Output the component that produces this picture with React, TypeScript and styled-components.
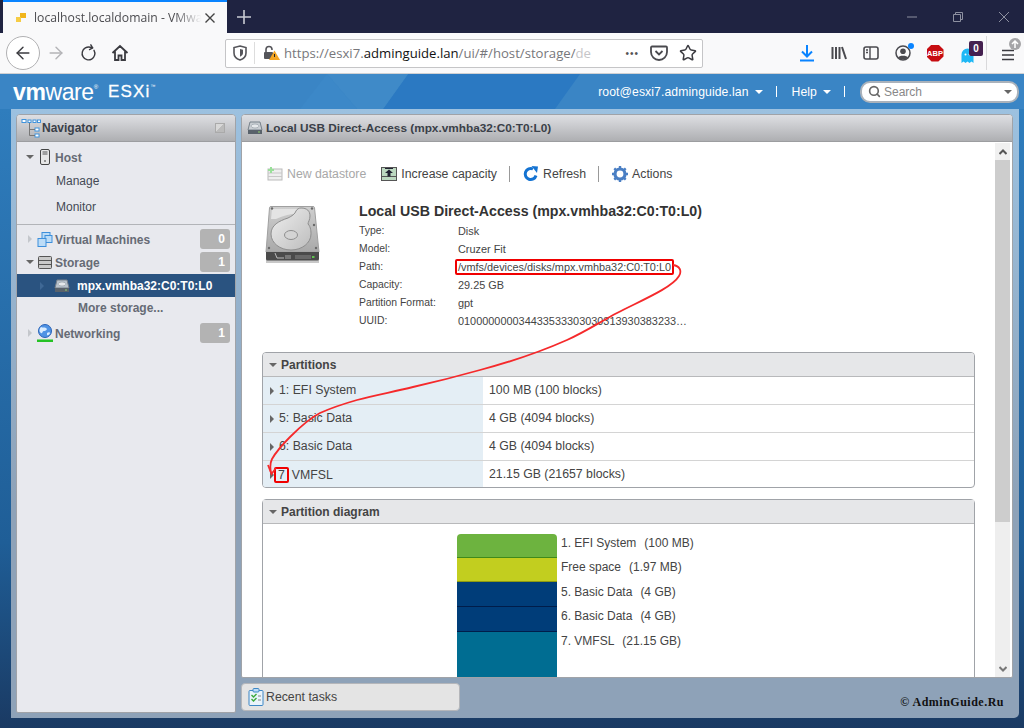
import React from 'react';
import styled, { createGlobalStyle } from 'styled-components';
import {
  ArrowLeft,
  ArrowRight,
  RotateCw,
  Star,
  Search as SearchGlyph,
} from 'lucide-react';

const INFO_ROWS: [string, string][] = [
  ['Type:', 'Disk'],
  ['Model:', 'Cruzer Fit'],
  ['Path:', '/vmfs/devices/disks/mpx.vmhba32:C0:T0:L0'],
  ['Capacity:', '29.25 GB'],
  ['Partition Format:', 'gpt'],
  ['UUID:', '010000000034433533303030313930383233…'],
];

const PARTITIONS: [string, string][] = [
  ['1: EFI System', '100 MB (100 blocks)'],
  ['5: Basic Data', '4 GB (4094 blocks)'],
  ['6: Basic Data', '4 GB (4094 blocks)'],
];

const SEGMENTS = [
  { h: 24, bg: '#6db33f', line: '#3f8a1a', name: '1. EFI System', size: '(100 MB)' },
  { h: 24, bg: '#c2ce1f', line: '#8f9a10', name: 'Free space', size: '(1.97 MB)' },
  { h: 25, bg: '#003d79', line: '#001d4a', name: '5. Basic Data', size: '(4 GB)' },
  { h: 25, bg: '#003d79', line: '#001d4a', name: '6. Basic Data', size: '(4 GB)' },
  { h: 46, bg: '#006d92', line: '#006d92', name: '7. VMFSL', size: '(21.15 GB)' },
];

const HddSmall = ({ light }: { light?: boolean }) => (
  <svg width="16" height="14" viewBox="0 0 16 14">
    <path d="M3 1h10l2 8H1z" fill={light ? '#b9c3cd' : '#c9ced3'} stroke="#77808a" />
    <rect x="1" y="9" width="14" height="4" fill="#59626b" />
    <ellipse cx="8" cy="5" rx="4" ry="2" fill="#e6e9ec" stroke="#8c959e" strokeWidth=".6" />
    <rect x="11" y="10.5" width="2" height="1" fill="#8fd16f" />
  </svg>
);

const DiskIcon = () => (
  <svg width="56" height="58" viewBox="0 0 56 58">
    <defs>
      <linearGradient id="diskBody" x1="0" y1="0" x2="0" y2="1">
        <stop offset="0" stopColor="#cfcfcf" />
        <stop offset="1" stopColor="#a9a9a9" />
      </linearGradient>
      <linearGradient id="diskPlatter" x1="0" y1="0" x2="1" y2="1">
        <stop offset="0" stopColor="#efefef" />
        <stop offset="1" stopColor="#bdbdbd" />
      </linearGradient>
    </defs>
    <rect x="1" y="54" width="53" height="3" fill="#c8c8c8" />
    <path d="M6 .5h42a1.500 1.500 0 0 1 1.500 1.300L54 46H1L4.500 1.800A1.500 1.500 0 0 1 6 .5z" fill="url(#diskBody)" stroke="#a0a0a0" />
    <path d="M1 46h53v7a1.500 1.500 0 0 1-1.500 1.500h-50A1.500 1.500 0 0 1 1 53z" fill="#4a4a4a" />
    <path d="M10 47l2 5h7" fill="none" stroke="#d8d8d8" strokeWidth=".8" />
    <rect x="20" y="49" width="6" height="4" fill="#777" />
    <rect x="30" y="49" width="16" height="4" fill="#686868" />
    <rect x="47" y="50" width="2.500" height="2" fill="#5fc24f" />
    <path d="M7 3h26v4c-8 1-16 3-22 6H6z" fill="#e4e4e4" />
    <path d="M36 2c6 0 9 3 9 8 0 4-2 6-2 8 3 3 3 8 3 10 0 9-9 16-20 16S6 37 6 28s8-13 17-16c4-2 7-4 8-7 1-2 3-3 5-3z" fill="url(#diskPlatter)" stroke="#8e8e8e" />
    <ellipse cx="26" cy="29" rx="6.500" ry="4.500" fill="#d4d4d4" stroke="#8e8e8e" />
    <g fill="#6a6a6a">
      <circle cx="7" cy="2.500" r="1.200" />
      <circle cx="47" cy="2.500" r="1.200" />
      <circle cx="49" cy="19" r="1.200" />
      <circle cx="4" cy="42" r="1.200" />
      <circle cx="51" cy="42" r="1.200" />
    </g>
  </svg>
);

const App = () => {
  return (
    <Root>
      <GlobalStyle />
      <TabBar>
        <Tab>
          <svg width="12" height="12" viewBox="0 0 12 12">
            <rect x="5" y="1" width="6" height="5" fill="#f1b51c" />
            <rect x="1" y="5" width="5" height="5" fill="#f6cc45" />
          </svg>
          <TabTitle>localhost.localdomain - VMwar</TabTitle>
          <svg width="10" height="10" viewBox="0 0 10 10">
            <path d="M.5.5l9 9M9.500.5l-9 9" stroke="#444" strokeWidth="1.4" />
          </svg>
        </Tab>
        <NewTab>
          <svg width="14" height="14" viewBox="0 0 14 14">
            <path d="M7 0v14M0 7h14" stroke="#c9cbd3" strokeWidth="1.6" />
          </svg>
        </NewTab>
        <WindowControls>
          <svg width="12" height="12" viewBox="0 0 12 12">
            <path d="M1 6h10" stroke="#8d90a0" />
          </svg>
          <svg width="12" height="12" viewBox="0 0 12 12">
            <path d="M1.500 3.500h7v7h-7zM3.500 3.500v-2h7v7h-2" fill="none" stroke="#8d90a0" />
          </svg>
          <svg width="12" height="12" viewBox="0 0 12 12">
            <path d="M1 1l10 10M11 1L1 11" stroke="#8d90a0" />
          </svg>
        </WindowControls>
      </TabBar>

      <BrowserBar>
        <BackButton>
          <ArrowLeft size={20} color="#3b3b40" strokeWidth={1.7} />
        </BackButton>
        <BarSlot>
          <ArrowRight size={20} color="#b4b4b7" strokeWidth={1.7} />
        </BarSlot>
        <BarSlot>
          <RotateCw size={17} color="#3b3b40" strokeWidth={2} style={{ transform: 'rotate(-30deg)' }} />
        </BarSlot>
        <BarSlot>
          <svg width="18" height="18" viewBox="0 0 18 18">
            <path d="M1.500 9L9 2l7.500 7M4 7.500V16h3.500v-4.500h3V16H14V7.500" fill="none" stroke="#3b3b40" strokeWidth="1.8" />
          </svg>
        </BarSlot>
        <UrlBox>
          <svg width="14" height="16" viewBox="0 0 14 16">
            <path d="M7 1l6 1.500V8c0 3.500-3 6-6 7-3-1-6-3.500-6-7V2.500z" fill="none" stroke="#55555a" strokeWidth="1.600" />
            <path d="M7 4l3 .7V8c0 1.700-1.500 3-3 3.700z" fill="#55555a" />
          </svg>
          <UrlDivider />
          <LockWrap>
            <svg width="17" height="16" viewBox="0 0 17 16">
              <path d="M3 7V4.500a3 3 0 0 1 6 0V5" fill="none" stroke="#55555a" strokeWidth="1.600" />
              <rect x="1" y="7" width="9" height="7" rx="1" fill="#55555a" />
              <path d="M11.500 5.500L17 15H6z" fill="#f5a623" />
              <path d="M11.500 9v3" stroke="#222" />
            </svg>
          </LockWrap>
          <UrlText>
            https://esxi7.<strong>adminguide.lan</strong>/ui/#/host/storage/<Faded>de</Faded>
          </UrlText>
          <UrlActions>
            <Dots>•••</Dots>
            <svg width="18" height="16" viewBox="0 0 18 16">
              <path d="M2 1.500h14a1 1 0 0 1 1 1V7a8 8 0 0 1-16 0V2.500a1 1 0 0 1 1-1z" fill="none" stroke="#4a4a4f" strokeWidth="1.800" />
              <path d="M5.500 6l3.500 3.500L12.500 6" fill="none" stroke="#4a4a4f" strokeWidth="1.800" />
            </svg>
            <Star size={18} color="#3b3b40" strokeWidth={2} />
          </UrlActions>
        </UrlBox>
        <RightTools>
          <BarSlot>
            <svg width="16" height="18" viewBox="0 0 16 18">
              <path d="M8 1v11M3 7.500L8 12.500l5-5M1 16.500h14" fill="none" stroke="#0a84ff" strokeWidth="2" />
            </svg>
          </BarSlot>
          <BarSlot>
            <svg width="16" height="16" viewBox="0 0 16 16">
              <path d="M1.500 2v12M5 2v12M8.500 2v12M11 2l4 12" stroke="#4a4a4f" strokeWidth="2" />
            </svg>
          </BarSlot>
          <BarSlot>
            <svg width="16" height="14" viewBox="0 0 16 14">
              <rect x="1" y="1" width="14" height="12" rx="2" fill="none" stroke="#4a4a4f" strokeWidth="1.600" />
              <path d="M7 1v12M3 4h2M3 6.500h2" stroke="#4a4a4f" strokeWidth="1.400" />
            </svg>
          </BarSlot>
          <BarSlot>
            <svg width="16" height="16" viewBox="0 0 16 16">
              <circle cx="8" cy="8" r="7" fill="none" stroke="#4a4a4f" strokeWidth="1.500" />
              <circle cx="8" cy="6.200" r="2.800" fill="#4a4a4f" />
              <path d="M3 12.500c1-2.500 9-2.500 10 0-2 2.500-8 2.500-10 0z" fill="#4a4a4f" />
            </svg>
            <SyncDot />
          </BarSlot>
          <BarSlot>
            <AbpSign>ABP</AbpSign>
          </BarSlot>
          <BarSlot>
            <GhostIcon width="13" height="16" viewBox="0 0 13 16">
              <path d="M.5 15V6.500a6 6 0 0 1 12 0V15l-2-1.500-2 1.500-2-1.500-2 1.500-2-1.500z" fill="#1fb8f5" />
              <circle cx="4.500" cy="6.500" r="1" fill="#fff" />
              <circle cx="8.500" cy="6.500" r="1" fill="#fff" />
            </GhostIcon>
            <GhostCount>0</GhostCount>
          </BarSlot>
          <BarDivider />
          <MenuSlot>
            <svg width="14" height="12" viewBox="0 0 14 12">
              <path d="M1 1.500h12M1 6h12M1 10.500h12" stroke="#3b3b40" strokeWidth="1.600" />
            </svg>
            <UpdateBadge>
              <svg width="8" height="8" viewBox="0 0 8 8">
                <path d="M4 8V1M1 4l3-3 3 3" fill="none" stroke="#fff" strokeWidth="1.500" />
              </svg>
            </UpdateBadge>
          </MenuSlot>
        </RightTools>
      </BrowserBar>

      <AppHeader>
        <HeaderArt width="1024" height="35" viewBox="0 0 1024 35">
          <polygon points="408,0 580,0 555,35 383,35" fill="#2b79c2" />
          <polygon points="327,0 408,0 383,35 357,35" fill="#3f8ac8" />
          <polygon points="327,0 357,35 300,35" fill="#3c88c8" />
        </HeaderArt>
        <Logo>
          <LogoWord>
            <b>vm</b>ware<sup>®</sup>
          </LogoWord>
          <LogoProduct>
            ESXi<sup>™</sup>
          </LogoProduct>
        </Logo>
        <HeaderMenu>
          <MenuLabel>root@esxi7.adminguide.lan</MenuLabel>
          <Caret $dir="down" $color="#fff" />
          <HeaderSep />
          <MenuLabel>Help</MenuLabel>
          <Caret $dir="down" $color="#fff" />
          <HeaderSep />
          <SearchBox>
            <SearchGlyph size={13} color="#666" strokeWidth={3} />
            <SearchHint>Search</SearchHint>
            <Caret $dir="down" $color="#666" />
          </SearchBox>
        </HeaderMenu>
      </AppHeader>

      <Workspace>
        <Frame>
          <Navigator>
            <NavHead>
              <svg width="20" height="20" viewBox="0 0 20 20">
                <g fill="#fff" stroke="#3f94de">
                  <rect x="1" y="1.500" width="4" height="3" />
                  <rect x="7" y="2" width="3" height="2.500" />
                  <rect x="12" y="2" width="3" height="2.500" />
                  <rect x="16.500" y="2" width="3" height="2.500" />
                  <rect x="14" y="10" width="4" height="3" />
                  <rect x="14" y="16" width="4" height="3" />
                </g>
                <path d="M8.500 5v12.500H14M8.500 11.500H14" fill="none" stroke="#777" />
              </svg>
              <NavTitle>Navigator</NavTitle>
              <CollapseBox />
            </NavHead>
            <NavBody>
              <HostSection>
                <HostRow $left={9}>
                  <Caret $dir="down" $color="#666" />
                  <NavIconSlot $gap={3}>
                    <svg width="10" height="16" viewBox="0 0 10 16">
                      <rect x=".5" y=".5" width="9" height="15" rx="1.500" fill="#e6e6e6" stroke="#444" />
                      <path d="M2.500 3h5M2.500 5h5" stroke="#555" />
                      <circle cx="5" cy="12" r="1" fill="#777" />
                    </svg>
                  </NavIconSlot>
                  <NavLabel>Host</NavLabel>
                </HostRow>
                <NavLink>Manage</NavLink>
                <NavLink>Monitor</NavLink>
              </HostSection>
              <TreeSection>
                <NavRow $left={11}>
                  <Caret $dir="right" $color="#c4c7cc" />
                  <NavIconSlot $gap={5}>
                    <svg width="16" height="15" viewBox="0 0 16 15">
                      <g fill="#bcdcf7" stroke="#3d8fdb">
                        <rect x="5" y=".5" width="8" height="6" />
                        <rect x="8" y="3.500" width="7" height="7" />
                        <rect x="1" y="6.500" width="8" height="8" />
                      </g>
                    </svg>
                  </NavIconSlot>
                  <NavLabel>Virtual Machines</NavLabel>
                  <Badge>0</Badge>
                </NavRow>
                <NavRow $left={9}>
                  <Caret $dir="down" $color="#666" />
                  <NavIconSlot $gap={3}>
                    <svg width="14" height="13" viewBox="0 0 14 13">
                      <rect x=".5" y=".5" width="13" height="12" rx="1" fill="#c9c9c9" stroke="#555" />
                      <path d="M.5 4.500h13M.5 8.500h13" stroke="#555" />
                    </svg>
                  </NavIconSlot>
                  <NavLabel>Storage</NavLabel>
                  <Badge>1</Badge>
                </NavRow>
                <SelectedRow>
                  <Caret $dir="right" $color="#3f6895" />
                  <HddSmall light />
                  <SelectedLabel>mpx.vmhba32:C0:T0:L0</SelectedLabel>
                </SelectedRow>
                <MoreStorage>More storage...</MoreStorage>
                <NetRow $left={11}>
                  <Caret $dir="right" $color="#c4c7cc" />
                  <NavIconSlot $gap={5}>
                    <svg width="16" height="18" viewBox="0 0 16 18">
                      <circle cx="8" cy="7" r="6.500" fill="#4f93e4" stroke="#2a63b8" />
                      <path d="M4 3c2 1 3 0 5 1s0 3-2 3-1 3-3 2-2-4 0-6zM10 9c1-1 3-1 3 0s-2 3-3 2z" fill="#d9ecff" />
                      <rect y="15.500" width="16" height="2.500" fill="#25c225" />
                    </svg>
                  </NavIconSlot>
                  <NavLabel>Networking</NavLabel>
                  <Badge>1</Badge>
                </NetRow>
              </TreeSection>
            </NavBody>
          </Navigator>

          <MainColumn>
            <MainPanel>
              <PanelHead>
                <HddSmall />
                <MainTitle>Local USB Direct-Access (mpx.vmhba32:C0:T0:L0)</MainTitle>
              </PanelHead>
              <MainBody>
                <Content>
                  <Toolbar>
                    <ToolButton $disabled>
                      <svg width="16" height="14" viewBox="0 0 16 14">
                        <rect x="1" y="2" width="14" height="11" fill="#eee" stroke="#bbb" />
                        <path d="M1 6h14M1 9.500h14" stroke="#c8c8c8" />
                        <path d="M4 0v6M1 3h6" stroke="#9adf9a" strokeWidth="2" />
                      </svg>
                      New datastore
                    </ToolButton>
                    <ToolButton>
                      <svg width="16" height="14" viewBox="0 0 16 14">
                        <rect x=".5" y=".5" width="15" height="13" fill="#bcd8c0" stroke="#555" />
                        <path d="M.5 9.500h15" stroke="#555" />
                        <path d="M8 2.500l4 3.500H9.500v3.500h-3V6H4z" fill="#223" />
                        <path d="M4 1.500h8" stroke="#223" />
                      </svg>
                      Increase capacity
                    </ToolButton>
                    <ToolSep />
                    <ToolButton>
                      <svg width="16" height="16" viewBox="0 0 16 16">
                        <path d="M13 9.500a5.500 5.500 0 1 1-3-6.500" fill="none" stroke="#1473d2" strokeWidth="3" />
                        <path d="M8.500 0L15 .5 14 7z" fill="#1473d2" />
                      </svg>
                      Refresh
                    </ToolButton>
                    <ToolSep />
                    <ToolButton>
                      <svg width="16" height="16" viewBox="0 0 16 16">
                        <circle cx="8" cy="8" r="5" fill="none" stroke="#4a7fc4" strokeWidth="3.200" />
                        <path d="M8 0v3M8 13v3M0 8h3M13 8h3M2.300 2.300l2.200 2.200M11.500 11.500l2.200 2.200M13.700 2.300l-2.200 2.200M4.500 11.500l-2.200 2.200" stroke="#4a7fc4" strokeWidth="2.400" />
                      </svg>
                      Actions
                    </ToolButton>
                  </Toolbar>

                  <InfoSection>
                    <DiskSlot>
                      <DiskIcon />
                    </DiskSlot>
                    <div>
                      <InfoTitle>Local USB Direct-Access (mpx.vmhba32:C0:T0:L0)</InfoTitle>
                      {INFO_ROWS.map(([label, value]) => (
                        <InfoRow key={label}>
                          <InfoLabel>{label}</InfoLabel>
                          {label === 'Path:' ? <PathMark>{value}</PathMark> : <span>{value}</span>}
                        </InfoRow>
                      ))}
                    </div>
                  </InfoSection>

                  <PartitionCard>
                    <CardHead>
                      <Caret $dir="down" $color="#666" />
                      Partitions
                    </CardHead>
                    {PARTITIONS.map(([name, size]) => (
                      <PartRow key={name}>
                        <PartName>
                          <Caret $dir="right" $color="#666" />
                          {name}
                        </PartName>
                        <PartSize>{size}</PartSize>
                      </PartRow>
                    ))}
                    <PartRow>
                      <PartName>
                        <Caret $dir="right" $color="#666" />
                        <NumberMark>7</NumberMark>VMFSL
                      </PartName>
                      <PartSize>21.15 GB (21657 blocks)</PartSize>
                    </PartRow>
                  </PartitionCard>

                  <DiagramCard>
                    <CardHead>
                      <Caret $dir="down" $color="#666" />
                      Partition diagram
                    </CardHead>
                    <Diagram>
                      <Bars>
                        {SEGMENTS.map((s) => (
                          <Segment key={s.name} $h={s.h} $bg={s.bg} $line={s.line} />
                        ))}
                      </Bars>
                      <Legend>
                        {SEGMENTS.map((s) => (
                          <LegendRow key={s.name}>
                            <span>{s.name}</span>
                            <span>{s.size}</span>
                          </LegendRow>
                        ))}
                      </Legend>
                    </Diagram>
                  </DiagramCard>
                </Content>
                <Scrollbar>
                  <ScrollArrow>
                    <svg width="8" height="6" viewBox="0 0 8 6">
                      <path d="M.5 5L4 1.500 7.500 5" fill="none" stroke="#555" strokeWidth="2" />
                    </svg>
                  </ScrollArrow>
                  <ScrollThumb />
                  <ScrollArrow>
                    <svg width="8" height="6" viewBox="0 0 8 6">
                      <path d="M.5 1L4 4.500 7.500 1" fill="none" stroke="#777" strokeWidth="2" />
                    </svg>
                  </ScrollArrow>
                </Scrollbar>
              </MainBody>
            </MainPanel>
            <BottomRow>
              <RecentTasks>
                <svg width="16" height="18" viewBox="0 0 16 18">
                  <rect x="1" y="2.500" width="14" height="15" rx="1" fill="#e9f3fb" stroke="#3d87c5" />
                  <rect x="5" y=".5" width="6" height="3.500" rx="1" fill="#bcdcf7" stroke="#3d87c5" />
                  <path d="M3.500 7l2 2 3-3M3.500 11l2 2 3-3" fill="none" stroke="#3caa3c" strokeWidth="1.400" />
                  <path d="M10 8h3M10 12h3" stroke="#888" />
                </svg>
                Recent tasks
              </RecentTasks>
              <Watermark>© AdminGuide.Ru</Watermark>
            </BottomRow>
          </MainColumn>
        </Frame>
      </Workspace>

      <Annotation width="1024" height="728" viewBox="0 0 1024 728">
        <path
          d="M673 265C680 266 682 271 679 276C672 288 640 301 617 313C600 322 585 332 567 340C540 352 510 362 480 370C455 377 435 382 413 387C393 392 375 395 357 400C343 404 331 408 320 413C310 418 299 428 290 437C282 445 276 452 272 459C270 463 270 468 271 473"
          fill="none"
          stroke="#f5292b"
          strokeWidth="1.800"
        />
        <path d="M268 465L271.500 474L276 468" fill="none" stroke="#f5292b" strokeWidth="1.800" />
      </Annotation>
    </Root>
  );
};

const GlobalStyle = createGlobalStyle`
  html, body {
    margin: 0;
    padding: 0;
    background: #1a3a63;
  }
  * {
    box-sizing: border-box;
  }
`;

const Root = styled.div`
  position: relative;
  display: flex;
  flex-direction: column;
  width: 1024px;
  height: 728px;
  overflow: hidden;
  font-family: 'Liberation Sans', Arial, sans-serif;
  color: #333;
`;

const TabBar = styled.div`
  display: flex;
  align-items: stretch;
  flex: 0 0 33px;
  padding-left: 3px;
  background: #1f2341;
`;

const Tab = styled.div`
  display: flex;
  align-items: center;
  width: 224px;
  padding: 0 12px;
  background: #f9f9fa;
  border-top: 2px solid #0a84ff;
  svg {
    flex: none;
  }
`;

const TabTitle = styled.div`
  flex: 1;
  min-width: 0;
  margin-left: 7px;
  white-space: nowrap;
  font: 12.2px 'Open Sans', sans-serif;
  color: #4c4c50;
  -webkit-mask-image: linear-gradient(to right, #000 82%, transparent 98%);
  mask-image: linear-gradient(to right, #000 82%, transparent 98%);
`;

const NewTab = styled.div`
  display: flex;
  align-items: center;
  padding-left: 10px;
`;

const WindowControls = styled.div`
  display: flex;
  align-items: center;
  gap: 34px;
  margin-left: auto;
  padding-right: 14px;
`;

const BrowserBar = styled.div`
  display: flex;
  align-items: center;
  flex: 0 0 41px;
  padding-left: 6px;
  background: #f9f9fa;
  border-bottom: 1px solid #d0d0d2;
`;

const BackButton = styled.div`
  display: flex;
  align-items: center;
  justify-content: center;
  width: 34px;
  height: 34px;
  background: #fff;
  border: 1px solid #b1b1b3;
  border-radius: 50%;
`;

const BarSlot = styled.div`
  position: relative;
  display: flex;
  align-items: center;
  justify-content: center;
  width: 32px;
  height: 32px;
`;

const UrlBox = styled.div`
  display: flex;
  align-items: center;
  width: 478px;
  height: 29px;
  margin-left: 89px;
  padding-left: 7px;
  background: #fff;
  border: 1px solid #c5c5c7;
  border-radius: 2px;
`;

const UrlDivider = styled.div`
  width: 1px;
  height: 22px;
  margin: 0 8px 0 7px;
  background: #ddd;
`;

const LockWrap = styled.div`
  display: flex;
  width: 21px;
`;

const UrlText = styled.div`
  font: 13.15px 'Open Sans', sans-serif;
  color: #77777b;
  white-space: nowrap;
  strong {
    font-weight: 400;
    color: #111;
  }
`;

const Faded = styled.span`
  color: #c5c5c8;
`;

const UrlActions = styled.div`
  display: flex;
  align-items: center;
  gap: 11px;
  margin-left: auto;
  padding-right: 5px;
`;

const Dots = styled.span`
  font-size: 10px;
  letter-spacing: 1px;
  color: #555;
`;

const RightTools = styled.div`
  display: flex;
  align-items: center;
  margin-left: 88px;
`;

const SyncDot = styled.span`
  position: absolute;
  top: 6px;
  right: 5px;
  width: 6px;
  height: 6px;
  border-radius: 50%;
  background: #0a84ff;
`;

const AbpSign = styled.div`
  display: flex;
  align-items: center;
  justify-content: center;
  width: 17px;
  height: 17px;
  background: #c70d11;
  clip-path: polygon(30% 0, 70% 0, 100% 30%, 100% 70%, 70% 100%, 30% 100%, 0 70%, 0 30%);
  color: #fff;
  font-size: 7.5px;
  font-weight: bold;
`;

const GhostIcon = styled.svg`
  margin-top: 6px;
`;

const GhostCount = styled.span`
  position: absolute;
  top: 4px;
  right: 0;
  width: 14px;
  height: 15px;
  border-radius: 2px;
  background: #44204f;
  color: #fff;
  font-size: 10px;
  font-weight: bold;
  line-height: 15px;
  text-align: center;
`;

const BarDivider = styled.div`
  width: 1px;
  height: 34px;
  margin-left: 3px;
  background: #d9d9db;
`;

const MenuSlot = styled.div`
  position: relative;
  display: flex;
  align-items: center;
  justify-content: center;
  width: 37px;
  height: 32px;
  padding: 4px 0 0 5px;
`;

const UpdateBadge = styled.span`
  position: absolute;
  top: 1px;
  right: 3px;
  display: flex;
  align-items: center;
  justify-content: center;
  width: 12px;
  height: 12px;
  border-radius: 50%;
  background: #a5a5a8;
`;

const AppHeader = styled.div`
  position: relative;
  display: flex;
  align-items: center;
  flex: 0 0 35px;
  padding: 0 5px 0 13px;
  background: #3a85c5;
  color: #fff;
`;

const HeaderArt = styled.svg`
  position: absolute;
  top: 0;
  left: 0;
`;

const Logo = styled.div`
  position: relative;
  display: flex;
  align-items: center;
  gap: 9px;
`;

const LogoWord = styled.div`
  width: 86px;
  font-size: 23px;
  letter-spacing: -0.4px;
  line-height: 30px;
  b {
    font-weight: bold;
  }
  sup {
    font-size: 6px;
    vertical-align: 11px;
    line-height: 0;
    letter-spacing: 0;
  }
`;

const LogoProduct = styled.div`
  font-size: 17px;
  letter-spacing: 1.200px;
  line-height: 30px;
  -webkit-text-stroke: 0.3px #fff;
  sup {
    font-size: 5px;
    vertical-align: 9px;
    line-height: 0;
    -webkit-text-stroke: 0;
  }
`;

const HeaderMenu = styled.div`
  position: relative;
  display: flex;
  align-items: center;
  margin-left: auto;
`;

const MenuLabel = styled.span`
  margin-right: 6px;
  font-size: 12.2px;
  letter-spacing: 0.1px;
`;

const HeaderSep = styled.span`
  width: 1px;
  height: 11px;
  margin: 0 15px 0 13px;
  background: #fff;
`;

const SearchBox = styled.div`
  display: flex;
  align-items: center;
  width: 159px;
  height: 22px;
  padding: 0 5px 0 6px;
  background: #fff;
  border: 2px solid #aab2bb;
  border-radius: 10px;
`;

const SearchHint = styled.span`
  flex: 1;
  margin-left: 3px;
  font-size: 12px;
  color: #888;
`;

const Caret = styled.span<{ $dir: 'down' | 'right'; $color: string }>`
  display: inline-block;
  flex: none;
  width: 0;
  height: 0;
  ${({ $dir, $color }) =>
    $dir === 'down'
      ? `border-left: 4px solid transparent;
         border-right: 4px solid transparent;
         border-top: 4px solid ${$color};`
      : `border-top: 4px solid transparent;
         border-bottom: 4px solid transparent;
         border-left: 4px solid ${$color};`}
`;

const Workspace = styled.div`
  flex: 1;
  padding: 0 5px 10px 11px;
  background: linear-gradient(#2f7dbd, #1f5e97 70%, #1a3a63);
`;

const Frame = styled.div`
  display: flex;
  gap: 5px;
  height: 100%;
  padding: 5px 6px 5px 5px;
  background: linear-gradient(#9cc1e0, #8ea2b8 65%);
  border-radius: 0 0 5px 0;
`;

const Navigator = styled.div`
  display: flex;
  flex-direction: column;
  width: 220px;
  background: #e8e9ee;
  border: 1px solid #a0a3a8;
  border-radius: 4px 4px 2px 2px;
  overflow: hidden;
`;

const PanelHead = styled.div`
  display: flex;
  align-items: center;
  flex: 0 0 27px;
  padding-left: 5px;
  background: linear-gradient(#dedfe3, #aeafb2);
  border-bottom: 1px solid #9c9da0;
`;

const NavHead = styled(PanelHead)`
  padding-left: 4px;
`;

const NavTitle = styled.span`
  margin-left: 1px;
  font-size: 12px;
  font-weight: bold;
  color: #3a3f48;
`;

const CollapseBox = styled.span`
  width: 10px;
  height: 10px;
  margin: 0 10px 0 auto;
  background: linear-gradient(135deg, #d8d8d8 50%, #bbb 50%);
  border: 1px solid #aaa;
`;

const NavBody = styled.div`
  flex: 1;
`;

const HostSection = styled.div`
  padding: 5px 0 4px;
  border-bottom: 1px solid #b2b4b8;
`;

const TreeSection = styled.div`
  padding-top: 4px;
`;

const NavRow = styled.div<{ $left: number }>`
  display: flex;
  align-items: center;
  height: 20px;
  margin-bottom: 3px;
  padding: 0 5px 0 ${({ $left }) => $left}px;
`;

const HostRow = styled(NavRow)`
  margin-bottom: 1px;
`;

const NetRow = styled(NavRow)`
  margin-top: 4px;
`;

const NavIconSlot = styled.span<{ $gap: number }>`
  display: flex;
  justify-content: center;
  align-items: center;
  width: 16px;
  margin: 0 2px 0 ${({ $gap }) => $gap}px;
`;

const NavLabel = styled.span`
  margin-top: 2px;
  font-size: 12px;
  font-weight: bold;
  color: #666b75;
`;

const NavLink = styled.div`
  height: 26px;
  padding-left: 39px;
  font-size: 12px;
  line-height: 26px;
  color: #444a55;
`;

const Badge = styled.span`
  width: 30px;
  height: 20px;
  margin-left: auto;
  padding-right: 5px;
  background: #b3b3b3;
  border-radius: 3px;
  color: #fff;
  font-size: 12px;
  font-weight: bold;
  line-height: 20px;
  text-align: right;
`;

const SelectedRow = styled.div`
  display: flex;
  align-items: center;
  height: 23px;
  margin-top: -1px;
  padding-left: 23px;
  background: #2a5380;
  svg {
    margin-left: 10px;
  }
`;

const SelectedLabel = styled.span`
  margin-left: 7px;
  color: #fff;
  font-size: 12px;
  font-weight: bold;
`;

const MoreStorage = styled.div`
  height: 22px;
  padding-left: 61px;
  font-size: 12px;
  font-weight: bold;
  line-height: 23px;
  color: #666b75;
`;

const MainColumn = styled.div`
  display: flex;
  flex: 1;
  flex-direction: column;
  min-width: 0;
`;

const MainPanel = styled.div`
  display: flex;
  flex-direction: column;
  height: 564px;
  background: #fff;
  border: 1px solid #a0a3a8;
  border-radius: 4px 4px 2px 2px;
  overflow: hidden;
`;

const MainTitle = styled.span`
  margin-left: 3px;
  font-size: 11.8px;
  font-weight: bold;
  color: #3a3f48;
`;

const MainBody = styled.div`
  display: flex;
  flex: 1;
  min-height: 0;
`;

const Content = styled.div`
  flex: 1;
  min-width: 0;
  padding: 20px 20px 0 20px;
  overflow: hidden;
`;

const Toolbar = styled.div`
  display: flex;
  align-items: center;
  height: 24px;
  padding-left: 5px;
`;

const ToolButton = styled.div<{ $disabled?: boolean }>`
  display: flex;
  align-items: center;
  gap: 4px;
  margin-right: 14px;
  font-size: 12.3px;
  color: ${({ $disabled }) => ($disabled ? '#a8a8a8' : '#444')};
  &:first-child {
    margin-right: 15px;
  }
  &:last-child {
    margin-right: 0;
  }
`;

const ToolSep = styled.span`
  width: 1px;
  height: 16px;
  margin: 0 13px 0 -2px;
  background: #999;
`;

const InfoSection = styled.div`
  display: flex;
  margin: 16px 0 22px;
  padding-left: 3px;
`;

const DiskSlot = styled.div`
  width: 94px;
  padding-top: 4px;
`;

const InfoTitle = styled.div`
  height: 20px;
  font-size: 14.2px;
  font-weight: bold;
  line-height: 18px;
  color: #333;
`;

const InfoRow = styled.div`
  display: flex;
  height: 18px;
  font-size: 10.9px;
  line-height: 18px;
  color: #444;
`;

const InfoLabel = styled.span`
  width: 99px;
  font-size: 10.4px;
`;

const PathMark = styled.span`
  height: 16px;
  margin: 1px 0 0 -3px;
  padding: 0 1px;
  border: 2px solid #f00000;
  border-radius: 2px;
  line-height: 12px;
`;

const PartitionCard = styled.div`
  height: 136px;
  border: 1px solid #a0a3a8;
  border-radius: 4px;
  overflow: hidden;
`;

const DiagramCard = styled.div`
  margin-top: 11px;
  border: 1px solid #a0a3a8;
  border-radius: 4px 4px 0 0;
`;

const CardHead = styled.div`
  display: flex;
  align-items: center;
  gap: 4px;
  height: 24px;
  padding-left: 6px;
  background: #e6e7e9;
  border-bottom: 1px solid #b8b9bb;
  font-size: 12px;
  font-weight: bold;
  color: #444;
`;

const PartRow = styled.div`
  display: flex;
  height: 28px;
  border-bottom: 1px solid #d4d4d4;
  font-size: 12.3px;
  line-height: 27px;
  color: #444;
  &:last-child {
    border-bottom: none;
  }
`;

const PartName = styled.div`
  display: flex;
  align-items: center;
  gap: 5px;
  width: 220px;
  padding-left: 7px;
  background: #e4eef5;
`;

const PartSize = styled.div`
  padding-left: 6px;
`;

const NumberMark = styled.span`
  height: 16px;
  margin: 0 -2px 0 -5px;
  padding: 0 2px;
  border: 2px solid #f00000;
  border-radius: 2px;
  line-height: 12px;
`;

const Diagram = styled.div`
  display: flex;
  height: 160px;
  padding: 10px 0 0 194px;
`;

const Bars = styled.div`
  width: 100px;
  border-radius: 4px 4px 0 0;
  overflow: hidden;
`;

const Segment = styled.div<{ $h: number; $bg: string; $line: string }>`
  height: ${({ $h }) => $h}px;
  background: ${({ $bg }) => $bg};
  border-bottom: 1px solid ${({ $line }) => $line};
`;

const Legend = styled.div`
  margin: -3px 0 0 4px;
`;

const LegendRow = styled.div`
  display: flex;
  gap: 8px;
  height: 24.4px;
  font-size: 12px;
  line-height: 24px;
  color: #444;
`;

const Scrollbar = styled.div`
  display: flex;
  flex-direction: column;
  flex: 0 0 15px;
  margin: 1px 2px 0 0;
  background: #eee;
`;

const ScrollArrow = styled.div`
  display: flex;
  align-items: center;
  justify-content: center;
  flex: 0 0 17px;
  background: #f0f0f0;
`;

const ScrollThumb = styled.div`
  flex: 0 0 362px;
  background: #cdcdcd;
  margin-bottom: auto;
`;

const BottomRow = styled.div`
  display: flex;
  align-items: center;
  justify-content: space-between;
  margin-top: 5px;
  padding-right: 9px;
`;

const RecentTasks = styled.div`
  display: flex;
  align-items: center;
  gap: 2px;
  width: 219px;
  height: 28px;
  padding-left: 6px;
  background: #e4e4e4;
  border: 1px solid #b4b6ba;
  border-radius: 4px;
  font-size: 12.3px;
  color: #444;
`;

const Watermark = styled.div`
  padding-top: 10px;
  font-family: 'Liberation Serif', 'Times New Roman', serif;
  font-size: 12px;
  font-weight: bold;
  letter-spacing: 0.5px;
  color: #111;
`;

const Annotation = styled.svg`
  position: absolute;
  top: 0;
  left: 0;
  pointer-events: none;
`;

export default App;
